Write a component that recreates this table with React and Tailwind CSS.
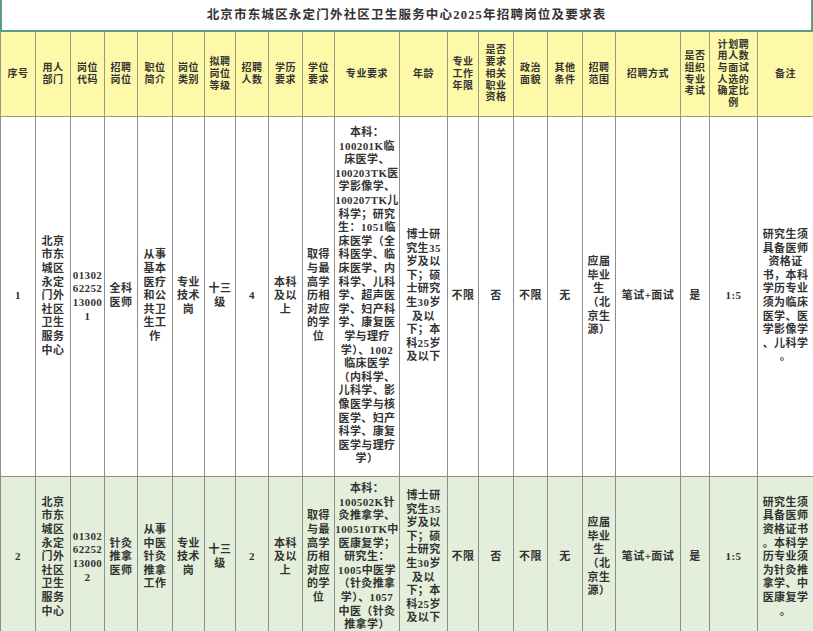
import React from 'react';

const cols = [35, 35, 34, 33, 35, 32, 31, 33, 34, 32, 65, 48, 31, 35, 34, 35, 33, 65, 29, 48, 56];

const headers = [
  ['序号'],
  ['用人', '部门'],
  ['岗位', '代码'],
  ['招聘', '岗位'],
  ['职位', '简介'],
  ['岗位', '类别'],
  ['拟聘', '岗位', '等级'],
  ['招聘', '人数'],
  ['学历', '要求'],
  ['学位', '要求'],
  ['专业要求'],
  ['年龄'],
  ['专业', '工作', '年限'],
  ['是否', '要求', '相关', '职业', '资格'],
  ['政治', '面貌'],
  ['其他', '条件'],
  ['招聘', '范围'],
  ['招聘方式'],
  ['是否', '组织', '专业', '考试'],
  ['计划聘', '用人数', '与面试', '人选的', '确定比', '例'],
  ['备注'],
];

const dept = ['北京', '市东', '城区', '永定', '门外', '社区', '卫生', '服务', '中心'];
const degree = ['取得', '与最', '高学', '历相', '对应', '的学', '位'];
const age = ['博士研', '究生35', '岁及以', '下；硕', '士研究', '生30岁', '及以', '下；本', '科25岁', '及以下'];
const scope = ['应届', '毕业', '生', '（北', '京生', '源）'];

const rows = [
  {
    bg: 'bg-white',
    cells: [
      ['1'],
      dept,
      ['01302', '62252', '13000', '1'],
      ['全科', '医师'],
      ['从事', '基本', '医疗', '和公', '共卫', '生工', '作'],
      ['专业', '技术', '岗'],
      ['十三', '级'],
      ['4'],
      ['本科', '及以', '上'],
      degree,
      [
        '本科：', '100201K临', '床医学、', '100203TK医', '学影像学、', '100207TK儿', '科学；研究',
        '生：1051临', '床医学（全', '科医学、临', '床医学、内', '科学、儿科', '学、超声医', '学、妇产科',
        '学、康复医', '学与理疗', '学）、1002', '临床医学', '（内科学、', '儿科学、影', '像医学与核',
        '医学、妇产', '科学、康复', '医学与理疗', '学）',
      ],
      age,
      ['不限'],
      ['否'],
      ['不限'],
      ['无'],
      scope,
      ['笔试+面试'],
      ['是'],
      ['1:5'],
      ['研究生须', '具备医师', '资格证', '书，本科', '学历专业', '须为临床', '医学、医', '学影像学', '、儿科学', '。'],
    ],
  },
  {
    bg: 'bg-[#e3efdb]',
    cells: [
      ['2'],
      dept,
      ['01302', '62252', '13000', '2'],
      ['针灸', '推拿', '医师'],
      ['从事', '中医', '针灸', '推拿', '工作'],
      ['专业', '技术', '岗'],
      ['十三', '级'],
      ['2'],
      ['本科', '及以', '上'],
      degree,
      [
        '本科：', '100502K针', '灸推拿学、', '100510TK中', '医康复学；', '研究生：', '1005中医学',
        '（针灸推拿', '学）、1057', '中医（针灸', '推拿学）',
      ],
      age,
      ['不限'],
      ['否'],
      ['不限'],
      ['无'],
      scope,
      ['笔试+面试'],
      ['是'],
      ['1:5'],
      ['研究生须', '具备医师', '资格证书', '。本科学', '历专业须', '为针灸推', '拿学、中', '医康复学', '。'],
    ],
  },
];

const Lines = ({ lines }) => lines.map((l, i) => <div key={i}>{l}</div>);

export default function App() {
  return (
    <div
      className="w-[813px] h-[631px] overflow-hidden bg-white text-[#333]"
      style={{ fontFamily: '"Liberation Serif", "Noto Sans CJK SC", serif' }}
    >
      <div className="h-[32px] flex items-center justify-center border-x-2 border-b-2 border-[#5e9c84] text-[12.5px] font-semibold tracking-[1.2px]">
        北京市东城区永定门外社区卫生服务中心2025年招聘岗位及要求表
      </div>
      <table className="table-fixed border-collapse w-[813px]">
        <colgroup>
          {cols.map((w, i) => (
            <col key={i} style={{ width: w }} />
          ))}
        </colgroup>
        <tbody>
          <tr className="h-[84px] bg-[#fdf9a8]">
            {headers.map((h, i) => (
              <td
                key={i}
                className="border border-[#9a9a80] border-t-0 p-0 text-center align-middle text-[10px] leading-[11.7px] tracking-[0.6px] font-semibold whitespace-nowrap"
              >
                <Lines lines={h} />
              </td>
            ))}
          </tr>
          {rows.map((r, ri) => (
            <tr key={ri} className={`${r.bg} ${ri === 0 ? 'h-[360px]' : 'h-[162px]'}`}>
              {r.cells.map((c, ci) => (
                <td
                  key={ci}
                  className="border border-[#8e8e8e] p-0 text-center align-middle text-[11px] leading-[13.6px] tracking-[0.4px] font-semibold whitespace-nowrap"
                >
                  <Lines lines={c} />
                </td>
              ))}
            </tr>
          ))}
        </tbody>
      </table>
    </div>
  );
}
